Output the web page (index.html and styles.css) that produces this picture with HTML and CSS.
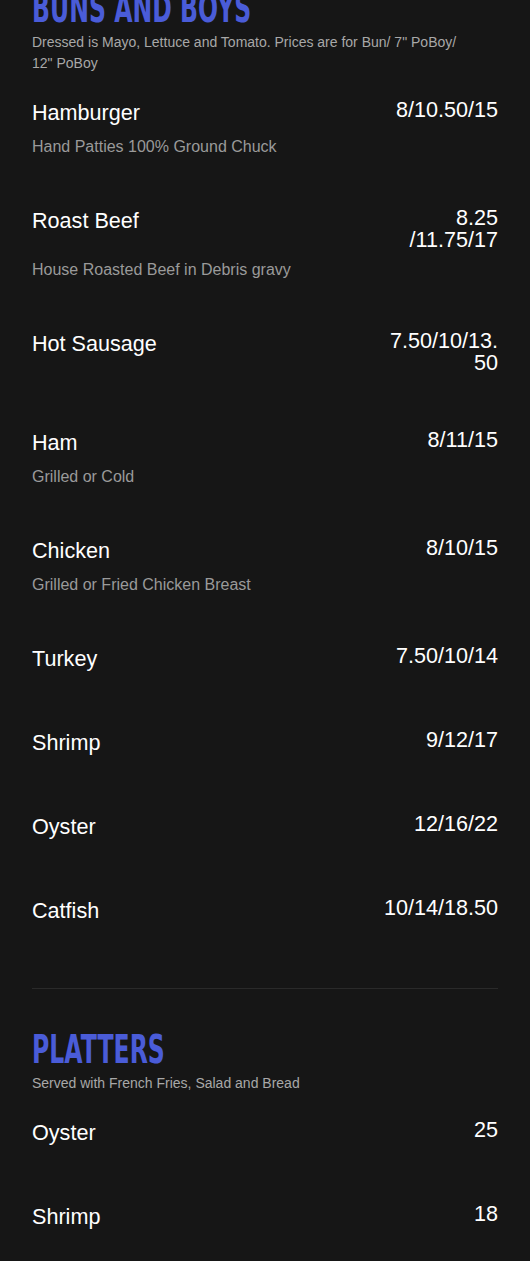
FILE: index.html
```html
<!DOCTYPE html>
<html lang="en">
<head>
    <meta charset="UTF-8">
    <meta name="viewport" content="width=device-width, initial-scale=1.0">
    <title>Menu</title>
    <link rel="stylesheet" href="styles.css">
</head>
<body>
    <div class="menu">
        <section class="menu-section">
            <h2 class="section-title"><span>BUNS AND BOYS</span></h2>
            <p class="section-desc">Dressed is Mayo, Lettuce and Tomato. Prices are for Bun/ 7" PoBoy/ 12" PoBoy</p>

            <div class="items">
                <div class="item">
                    <div class="item-head">
                        <div class="item-name">Hamburger</div>
                        <div class="item-price">8/10.50/15</div>
                    </div>
                    <p class="item-desc">Hand Patties 100% Ground Chuck</p>
                </div>
                <div class="item">
                    <div class="item-head">
                        <div class="item-name">Roast Beef</div>
                        <div class="item-price">8.25 /11.75/17</div>
                    </div>
                    <p class="item-desc">House Roasted Beef in Debris gravy</p>
                </div>
                <div class="item">
                    <div class="item-head">
                        <div class="item-name">Hot Sausage</div>
                        <div class="item-price">7.50/10/13.50</div>
                    </div>
                </div>
                <div class="item">
                    <div class="item-head">
                        <div class="item-name">Ham</div>
                        <div class="item-price">8/11/15</div>
                    </div>
                    <p class="item-desc">Grilled or Cold</p>
                </div>
                <div class="item">
                    <div class="item-head">
                        <div class="item-name">Chicken</div>
                        <div class="item-price">8/10/15</div>
                    </div>
                    <p class="item-desc">Grilled or Fried Chicken Breast</p>
                </div>
                <div class="item">
                    <div class="item-head">
                        <div class="item-name">Turkey</div>
                        <div class="item-price">7.50/10/14</div>
                    </div>
                </div>
                <div class="item">
                    <div class="item-head">
                        <div class="item-name">Shrimp</div>
                        <div class="item-price">9/12/17</div>
                    </div>
                </div>
                <div class="item">
                    <div class="item-head">
                        <div class="item-name">Oyster</div>
                        <div class="item-price">12/16/22</div>
                    </div>
                </div>
                <div class="item">
                    <div class="item-head">
                        <div class="item-name">Catfish</div>
                        <div class="item-price">10/14/18.50</div>
                    </div>
                </div>
            </div>
        </section>

        <section class="menu-section">
            <h2 class="section-title"><span>PLATTERS</span></h2>
            <p class="section-desc">Served with French Fries, Salad and Bread</p>

            <div class="items">
                <div class="item">
                    <div class="item-head">
                        <div class="item-name">Oyster</div>
                        <div class="item-price">25</div>
                    </div>
                </div>
                <div class="item">
                    <div class="item-head">
                        <div class="item-name">Shrimp</div>
                        <div class="item-price">18</div>
                    </div>
                </div>
            </div>
        </section>
    </div>
</body>
</html>
```

FILE: styles.css
```css
body {
    margin: 0;
    background-color: #161616;
    color: #fff;
    font-family: 'Liberation Sans', Arial, sans-serif;
}
.menu {
    margin-top: -11px;
    padding: 0 32px;
}
.menu-section {
    padding-bottom: 55px;
    border-bottom: 1px solid #2a2a2a;
}
.menu-section + .menu-section {
    padding-top: 41px;
    border-bottom: none;
}
.section-title {
    margin: 0;
    font-family: 'DejaVu Sans', sans-serif;
    font-size: 38.4px;
    line-height: 40px;
    font-weight: 700;
    color: #4a5cd8;
    white-space: nowrap;
}
.section-title span {
    display: inline-block;
    transform: scaleX(0.615);
    transform-origin: left center;
}
.section-desc {
    margin: 3px 0 0;
    max-width: 440px;
    font-size: 14px;
    line-height: 21px;
    color: #a8a8a8;
}
.items {
    display: flex;
    flex-direction: column;
    gap: 48px;
    margin-top: 25px;
}
.item-head {
    display: flex;
    justify-content: space-between;
    align-items: flex-start;
    gap: 16px;
    margin-bottom: 8px;
}
.item-name {
    font-size: 21.6px;
    line-height: 28px;
}
.item-price {
    flex: 0 0 25%;
    font-size: 21.6px;
    line-height: 21.6px;
    text-align: right;
    overflow-wrap: anywhere;
}
.item-desc {
    margin: 0;
    font-size: 16px;
    line-height: 24px;
    color: #9a9a9a;
}
```
